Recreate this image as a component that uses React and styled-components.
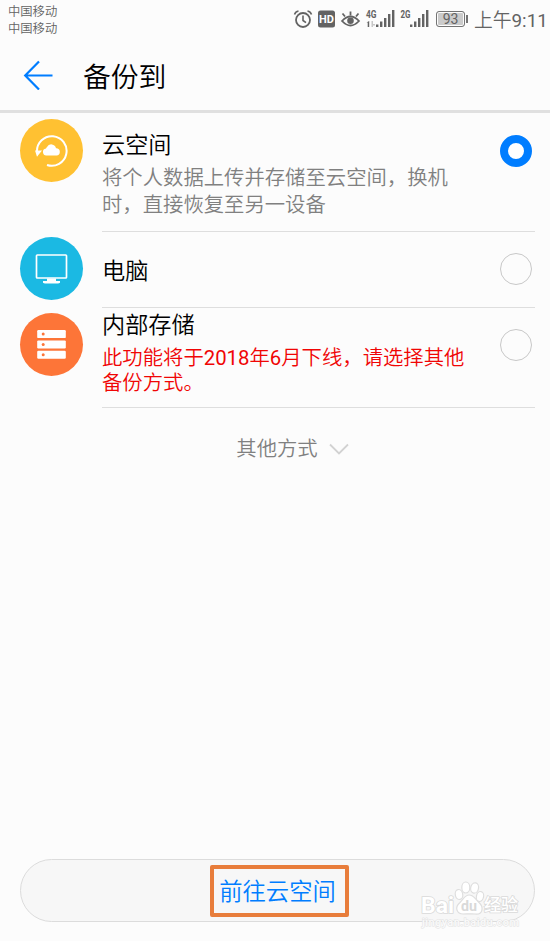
import React, { useState } from 'react';
import styled, { createGlobalStyle, ThemeProvider } from 'styled-components';

const theme = {
  fonts: {
    mainFont: 'Roboto, "Noto Sans CJK SC", sans-serif',
  },
  colors: {
    background: '#fcfcfc',
    primary: '#007dff',
    status: '#636363',
    muted: '#808080',
    warning: '#f00505',
    line: '#dedede',
  },
};

const GlobalStyle = createGlobalStyle`
  * {
    box-sizing: border-box;
  }

  body {
    margin: 0;
    background: #fcfcfc;
  }
`;

const Screen = styled.div`
  position: relative;
  display: flex;
  flex-direction: column;
  width: 550px;
  height: 941px;
  overflow: hidden;
  background: ${({ theme }) => theme.colors.background};
  font-family: ${({ theme }) => theme.fonts.mainFont};
  font-weight: 350;
`;

const StatusContainer = styled.div`
  display: flex;
  justify-content: space-between;
  height: 40px;
  padding: 3px 3px 0 8px;
  color: ${({ theme }) => theme.colors.status};
`;

const Carriers = styled.div`
  display: flex;
  flex-direction: column;
  padding-top: 1px;
  font-size: 12.3px;
  line-height: 17px;
`;

const StatusRight = styled.div`
  display: flex;
  align-items: center;
  height: 32px;
`;

const StatusIcons = styled.svg`
  display: block;
  flex: none;
`;

const Battery = styled.div`
  display: flex;
  align-items: center;
  justify-content: center;
  width: 29px;
  height: 16px;
  margin-left: 6px;
  border: 1px solid #747474;
  border-radius: 3px;
  background: #cbcbcb;
  box-shadow: inset 0 0 0 1px #fcfcfc;
  font-size: 14px;
  font-weight: 400;
  line-height: 16px;
`;

const BatteryCap = styled.div`
  width: 2px;
  height: 8px;
  margin-left: 1px;
  background: #747474;
`;

const Time = styled.span`
  width: 73px;
  margin-left: 6px;
  padding-bottom: 1px;
  font-size: 18.8px;
  white-space: nowrap;
`;

const Digits = styled.span`
  font-weight: 400;
`;

const HeaderContainer = styled.header`
  display: flex;
  align-items: center;
  height: 73px;
  padding: 0 0 1px 23px;
  border-bottom: 3px solid #e0e0e0;
`;

const HeaderTitle = styled.h1`
  margin: 0 0 0 30px;
  padding-top: 7px;
  font-size: 27.8px;
  font-weight: 350;
  line-height: 36px;
  color: #000;
`;

const OptionRow = styled.div`
  display: flex;
  height: ${({ $height }) => $height}px;
  padding: 0 15px 0 20px;
  cursor: pointer;
`;

const OptionIcon = styled.div`
  display: flex;
  flex: none;
  align-items: center;
  justify-content: center;
  width: 63px;
  height: 63px;
  margin: ${({ $top }) => $top}px 19px 0 0;
  border-radius: 50%;
  background: ${({ $color }) => $color};
`;

const OptionBody = styled.div`
  display: flex;
  flex: 1;
  justify-content: space-between;
  padding-right: 3px;
  border-bottom: 1px solid ${({ theme }) => theme.colors.line};
`;

const Content = styled.div`
  display: flex;
  flex-direction: column;
  padding-top: ${({ $top }) => $top}px;
`;

const OptionTitle = styled.h2`
  margin: 0;
  font-size: 23.2px;
  font-weight: 350;
  line-height: 30px;
  color: #000;
`;

const OptionText = styled.p`
  width: 374px;
  margin: ${({ $warning }) => ($warning ? 6 : 5)}px 0 0;
  font-size: 20.35px;
  line-height: ${({ $warning }) => ($warning ? 24.5 : 27)}px;
  color: ${({ $warning, theme }) => ($warning ? theme.colors.warning : theme.colors.muted)};
`;

const Radio = styled.span`
  flex: none;
  width: 32px;
  height: 32px;
  margin-top: ${({ $top }) => $top}px;
  border: ${({ $checked, theme }) => ($checked ? `8px solid ${theme.colors.primary}` : '1.5px solid #c8c8c8')};
  border-radius: 50%;
  background: ${({ $checked }) => ($checked ? '#fff' : 'transparent')};
`;

const MoreButton = styled.button`
  display: flex;
  align-items: center;
  align-self: center;
  gap: 11px;
  margin: 26px 0 0 35px;
  padding: 0;
  border: 0;
  background: none;
  font-family: inherit;
  font-size: 20.35px;
  font-weight: 350;
  line-height: 30px;
  color: ${({ theme }) => theme.colors.muted};
`;

const Footer = styled.footer`
  display: flex;
  margin-top: auto;
  padding: 0 15px 19px 20px;
`;

const ConfirmButton = styled.button`
  display: flex;
  flex: 1;
  align-items: center;
  justify-content: center;
  height: 63px;
  padding: 0 0 0 3px;
  border: 1px solid #dcdcdc;
  border-radius: 32px;
  background: #f7f7f7;
  font-family: inherit;
  font-size: 23.3px;
  font-weight: 350;
  color: ${({ theme }) => theme.colors.primary};
`;

const Highlight = styled.span`
  display: flex;
  align-items: center;
  justify-content: center;
  width: 139px;
  height: 52px;
  padding: 0 3px 1px 0;
  border: 4px solid #e87d3b;
  border-radius: 2px;
`;

const Watermark = styled.svg`
  position: absolute;
  top: 878px;
  left: 416px;
  pointer-events: none;
`;

const StatusSymbols = () => (
  <StatusIcons width="137" height="24" viewBox="293 7 137 24" fill="none" stroke="#636363">
    <circle cx="303" cy="20" r="7" strokeWidth="1.8" />
    <path d="M303 15.5v5l3 2.2M294.5 14.5q1-3 4-3.5M307.5 11q3 .5 4 3.5" strokeWidth="1.6" />
    <rect x="318" y="10.5" width="17" height="17" rx="2.5" fill="#636363" stroke="none" />
    <text x="326.5" y="23.2" textAnchor="middle" fill="#fff" stroke="none" fontSize="11" fontWeight="700">
      HD
    </text>
    <path d="M342 21q8.5-9 17 0q-8.5 9-17 0Z" strokeWidth="1.8" />
    <circle cx="350.5" cy="20.8" r="3.3" fill="#636363" stroke="none" />
    <path d="M350.5 15.5v-4M345 16.5l-2.5-3M356 16.5l2.5-3" strokeWidth="1.8" />
    <g fill="#636363" stroke="none" fontSize="10" fontWeight="700">
      <text x="366" y="17.8" textLength="10.5" lengthAdjust="spacingAndGlyphs">4G</text>
      <text x="400.5" y="17.8" textLength="10" lengthAdjust="spacingAndGlyphs">2G</text>
      <path d="M366.5 22.5l2.7-1.5v6h-1.5v-4.5z" />
      <path d="M371.5 21h1.5v6h-1.5zM373 24h2v1.5h-2z" opacity=".35" />
      <path d="M376 24.5h2.4v2.5h-2.4zM380 21.5h2.4v5.5h-2.4zM384 18h2.4v9h-2.4zM388 14h2.4v13h-2.4zM392 10h2.4v17h-2.4z" />
      <path d="M410 24.5h2.4v2.5h-2.4zM414 21.5h2.4v5.5h-2.4zM418 18h2.4v9h-2.4zM422 14h2.4v13h-2.4zM426 10h2.4v17h-2.4z" />
    </g>
  </StatusIcons>
);

const BackIcon = () => (
  <svg width="30" height="30" viewBox="0 0 30 30" fill="none" stroke="#007dff" strokeWidth="2.2">
    <path d="M16 1.5 2.2 15.5 16 29.5M2 15.5h27.5" />
  </svg>
);

const CloudIcon = () => (
  <svg width="33" height="33" viewBox="0 0 33 33" fill="none">
    <path d="M2 17.5A14.8 14.8 0 1 1 12 31" stroke="#fff" strokeWidth="2" />
    <path d="M0 16.5h7L2 22.8Z" fill="#fff" />
    <path
      d="M12 21.5h9.6a3.7 3.7 0 0 0 .2-7.3h-.8a4.8 4.8 0 0 0-9-1.2 2.8 2.8 0 0 0-1 1.5A3.5 3.5 0 0 0 12 21.5Z"
      fill="#fff"
    />
  </svg>
);

const ComputerIcon = () => (
  <svg width="33" height="31" viewBox="0 0 33 31" fill="none">
    <rect x="1.5" y="2" width="30" height="23" rx="0.8" stroke="#fff" strokeWidth="1.7" />
    <path d="M12 25.5h9v2.5h4v1.8q-1 .7-2 .7H10q-1 0-2-.7V28h4z" fill="#fff" />
  </svg>
);

const StorageIcon = () => (
  <svg width="29" height="29" viewBox="0 0 29 29">
    {[0, 10.3, 20.6].map((y) => (
      <g key={y}>
        <rect x="0.2" y={y + 0.1} width="28.6" height="8" rx="1.2" fill="#fff" />
        <circle cx="6.2" cy={y + 4.1} r="1.5" fill="#fd7538" />
      </g>
    ))}
  </svg>
);

const ChevronIcon = () => (
  <svg width="20" height="13" viewBox="0 0 20 13" fill="none" stroke="#d2d2d2" strokeWidth="1.8">
    <path d="M1 1.5 10 10.5 19 1.5" />
  </svg>
);

const BaiduMark = () => (
  <Watermark width="110" height="54" viewBox="416 878 110 54">
    <g fill="#fff" stroke="#dedede" strokeWidth="1.2">
      <ellipse cx="459" cy="894.5" rx="3.7" ry="5" transform="rotate(-12 459 894.5)" />
      <ellipse cx="465.8" cy="887.5" rx="4" ry="5.5" />
      <ellipse cx="474.6" cy="888" rx="3.9" ry="5.2" transform="rotate(12 474.6 888)" />
      <ellipse cx="480" cy="896.5" rx="3.6" ry="5" transform="rotate(12 480 896.5)" />
      <path d="M469 895c-4 0-5.5 4-9 7.5-6 5-3 11.5 3 11.5 4 0 8-.5 12 0 8 1 9-7 4-11.5-4-3.5-5-7.5-10-7.5Z" />
    </g>
    <g fill="#fff" stroke="#dadada" strokeWidth="1.6" paintOrder="stroke" fontWeight="700">
      <text x="421" y="912.5" fontSize="22" textLength="33" lengthAdjust="spacingAndGlyphs">Bai</text>
      <text x="461" y="911" fontSize="15" fill="#d9d9d9" stroke="none" textLength="16" lengthAdjust="spacingAndGlyphs">
        du
      </text>
      <text x="484" y="911" fontSize="17" fontWeight="500" textLength="34">经验</text>
    </g>
    <text
      x="422"
      y="926"
      fill="#fafafa"
      stroke="#e2e2e2"
      strokeWidth="1"
      paintOrder="stroke"
      fontSize="11"
      fontWeight="500"
      textLength="97"
    >
      jingyan.baidu.com
    </text>
  </Watermark>
);

const OPTIONS = [
  {
    id: 'cloud',
    title: '云空间',
    text: '将个人数据上传并存储至云空间，换机时，直接恢复至另一设备',
    icon: <CloudIcon />,
    color: '#ffc132',
    height: 119,
    iconTop: 6,
    titleTop: 17,
    radioTop: 22,
  },
  {
    id: 'computer',
    title: '电脑',
    icon: <ComputerIcon />,
    color: '#1bb9e3',
    height: 76,
    iconTop: 5,
    titleTop: 24,
    radioTop: 21,
  },
  {
    id: 'storage',
    title: '内部存储',
    text: (
      <>
        此功能将于<Digits>2018</Digits>年<Digits>6</Digits>月下线，请选择其他备份方式。
      </>
    ),
    warning: true,
    icon: <StorageIcon />,
    color: '#fd7538',
    height: 100,
    iconTop: 5,
    titleTop: 2,
    radioTop: 21,
  },
];

const BackupOption = ({ option, checked, onSelect }) => (
  <OptionRow $height={option.height} role="radio" aria-checked={checked} onClick={onSelect}>
    <OptionIcon $color={option.color} $top={option.iconTop}>
      {option.icon}
    </OptionIcon>
    <OptionBody>
      <Content $top={option.titleTop}>
        <OptionTitle>{option.title}</OptionTitle>
        {option.text && <OptionText $warning={option.warning}>{option.text}</OptionText>}
      </Content>
      <Radio $checked={checked} $top={option.radioTop} />
    </OptionBody>
  </OptionRow>
);

const App = () => {
  const [selected, setSelected] = useState('cloud');

  return (
    <ThemeProvider theme={theme}>
      <GlobalStyle />
      <Screen>
        <StatusContainer>
          <Carriers>
            <span>中国移动</span>
            <span>中国移动</span>
          </Carriers>
          <StatusRight>
            <StatusSymbols />
            <Battery>93</Battery>
            <BatteryCap />
            <Time>
              上午<Digits>9:11</Digits>
            </Time>
          </StatusRight>
        </StatusContainer>
        <HeaderContainer>
          <BackIcon />
          <HeaderTitle>备份到</HeaderTitle>
        </HeaderContainer>
        {OPTIONS.map((option) => (
          <BackupOption
            key={option.id}
            option={option}
            checked={selected === option.id}
            onSelect={() => setSelected(option.id)}
          />
        ))}
        <MoreButton>
          其他方式
          <ChevronIcon />
        </MoreButton>
        <Footer>
          <ConfirmButton>
            <Highlight>前往云空间</Highlight>
          </ConfirmButton>
        </Footer>
        <BaiduMark />
      </Screen>
    </ThemeProvider>
  );
};

export default App;
